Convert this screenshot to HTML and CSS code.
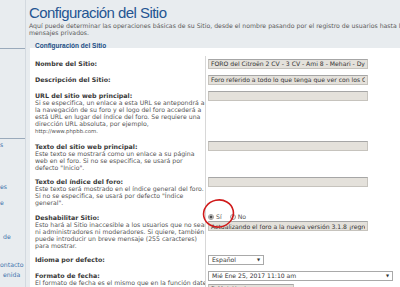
FILE: index.html
```html
<!DOCTYPE html>
<html lang="es">

<head>

 <meta charset="UTF-8">
 <meta name="viewport" content="width=device-width">

 <title>Configuración del Sitio</title>

 <!-- Estilos CSS -->
 <link rel="stylesheet" href="styles.css">

</head>

<body>

 <div class="pagina">

  <!-- Menú lateral (recortado) -->
  <nav class="menu">
   <div class="menu-cabecera"></div>
   <div class="menu-bloque"></div>
   <ul class="menu-lista">
    <li class="m1">s</li>
    <li class="m2">es</li>
    <li class="m3">e</li>
    <li class="m4">de</li>
    <li class="m5">ontacto</li>
    <li class="m6">enida</li>
   </ul>
  </nav>

  <main class="principal">

   <h1>Configuración del Sitio</h1>

   <p class="intro">Aquí puede determinar las operaciones básicas de su Sitio, desde el nombre pasando por el registro de usuarios hasta los<br>mensajes privados.</p>

   <h2 class="leyenda">Configuración del Sitio</h2>

   <div class="panel">

    <dl>
     <dt><label>Nombre del Sitio:</label></dt>
     <dd><input class="campo" value="FORO del Citroën 2 CV - 3 CV - Ami 8 - Mehari - Dyane"></dd>
    </dl>

    <dl>
     <dt><label>Descripción del Sitio:</label></dt>
     <dd><input class="campo" value="Foro referido a todo lo que tenga que ver con los Citroën"></dd>
    </dl>

    <dl>
     <dt>
      <label>URL del sitio web principal:</label>
      <span>Si se especifica, un enlace a esta URL se antepondrá a<br>la navegación de su foro y el logo del foro accederá a<br>está URL en lugar del índice del foro. Se requiere una<br>dirección URL absoluta, por ejemplo,<br><samp>http://www.phpbb.com.</samp></span>
     </dt>
     <dd><input class="campo" value=""></dd>
    </dl>

    <dl>
     <dt>
      <label>Texto del sitio web principal:</label>
      <span>Este texto se mostrará como un enlace a su página<br>web en el foro. Si no se especifica, se usará por<br>defecto "Inicio".</span>
     </dt>
     <dd><input class="campo" value=""></dd>
    </dl>

    <dl>
     <dt>
      <label>Texto del índice del foro:</label>
      <span>Este texto será mostrado en el índice general del foro.<br>Si no se especifica, se usará por defecto "Índice<br>general".</span>
     </dt>
     <dd><input class="campo" value=""></dd>
    </dl>

    <dl>
     <dt>
      <label>Deshabilitar Sitio:</label>
      <span>Esto hará al Sitio inaccesible a los usuarios que no sean<br>ni administradores ni moderadores. Si quiere, también<br>puede introducir un breve mensaje (255 caracteres)<br>para mostrar.</span>
     </dt>
     <dd>
      <div class="opciones">
       <label><input type="radio" name="deshabilitar" checked> Sí</label>
       <label><input type="radio" name="deshabilitar"> No</label>
      </div>
      <input class="campo" value="Actualizando el foro a la nueva versión 3.1.8 ¡regresamos pronto!">
     </dd>
    </dl>

    <dl>
     <dt><label>Idioma por defecto:</label></dt>
     <dd><div class="lista lista-corta">Español <b>▼</b></div></dd>
    </dl>

    <dl>
     <dt>
      <label>Formato de fecha:</label>
      <span>El formato de fecha es el mismo que en la función date<br>de PHP.</span>
     </dt>
     <dd>
      <div class="lista lista-larga">Mié Ene 25, 2017 11:10 am <b>▼</b></div>
      <input class="campo campo-fecha" value="D M d, Y g:i a">
     </dd>
    </dl>

   </div>

  </main>

 </div>

 <!-- Marca roja sobre la opción "Sí" -->
 <svg class="marca" width="38" height="34" viewBox="0 0 38 34">
  <ellipse cx="18.5" cy="16.5" rx="15" ry="13.5" transform="rotate(-12 18.5 16.5)" fill="none" stroke="#d01a1a" stroke-width="1.6"/>
 </svg>

</body>

</html>
```

FILE: styles.css
```css
/* Configuración básica */
* {
    margin: 0;
    padding: 0;
    box-sizing: border-box;
}

html,
body {
    width: 400px;
    height: 287px;
    overflow: hidden;
}

body {
    position: relative;
    background-color: #e8ecef;
    color: #4a4a4a;
    font-family: 'DejaVu Sans', Verdana, sans-serif;
    font-size: 6.2px;
    line-height: 7px;
}

.pagina {
    display: flex;
    height: 100%;
}

/* Menú lateral */
.menu {
    width: 26px;
    flex: none;
    border-right: 1px solid #d3d9df;
    overflow: hidden;
}

.menu-cabecera {
    height: 49px;
    border-bottom: 1px solid #9aaabb;
}

.menu-bloque {
    height: 90px;
    border-bottom: 1px solid #9aaabb;
}

.menu-lista {
    list-style: none;
    color: #3f74ad;
    line-height: 8px;
    white-space: nowrap;
}

.m1 { margin-top: 2px; }
.m2 { margin-top: 34px; }
.m3 { margin-top: 8px; }
.m4 { margin-top: 26px; padding-left: 3px; }
.m5 { margin-top: 20px; }
.m6 { margin-top: 2px; padding-left: 3px; }

/* Contenido */
.principal {
    flex: 1;
    min-width: 0;
    padding: 4px 0 0 3px;
    overflow: hidden;
}

h1 {
    font-family: 'Liberation Sans', Arial, sans-serif;
    font-weight: normal;
    font-size: 15px;
    line-height: 17px;
    letter-spacing: -0.55px;
    color: #245592;
}

.intro {
    margin-top: 1px;
    color: #5a5a5a;
    white-space: nowrap;
}

.leyenda {
    margin-top: 6px;
    margin-bottom: -1.5px;
    padding-left: 6px;
    font-family: 'Liberation Sans', Arial, sans-serif;
    font-size: 6.5px;
    line-height: 7px;
    font-weight: bold;
    color: #1d4f86;
}

.panel {
    margin-left: 1px;
    padding-top: 8px;
    height: 300px;
    background-color: #ffffff;
}

dl {
    display: flex;
}

dt {
    width: 176px;
    flex: none;
    padding: 4.5px 0 3px 5px;
    border-right: 1px solid #d8d8d8;
    overflow: hidden;
    white-space: nowrap;
}

dt label {
    display: block;
    font-size: 6.3px;
    font-weight: bold;
    color: #383838;
}

dt span {
    display: block;
    color: #555555;
}

dt samp {
    font-family: 'DejaVu Sans', sans-serif;
    font-size: 5.4px;
}

dd {
    padding: 3px 0 3px 2px;
    min-width: 0;
}

/* Campos */
.campo {
    display: block;
    width: 160px;
    height: 10px;
    padding: 0 2px;
    border: 1px solid #c6c3bd;
    border-top-color: #a6a6a6;
    background-color: #e4e1db;
    color: #333333;
    font-family: inherit;
    font-size: 6.1px;
    outline: none;
}

.campo-fecha {
    width: 86px;
    margin-top: 3px;
}

.opciones {
    display: flex;
    align-items: center;
    gap: 8px;
    height: 9px;
    color: #555555;
}

.opciones label {
    display: flex;
    align-items: center;
    gap: 2px;
}

input[type="radio"] {
    appearance: none;
    width: 6px;
    height: 6px;
    border: 1px solid #9c9c9c;
    border-radius: 50%;
    background-color: #f3f3f3;
}

input[type="radio"]:checked {
    background: radial-gradient(circle, #4a4a4a 0 1.3px, #f3f3f3 1.8px);
}

.lista {
    display: flex;
    justify-content: space-between;
    align-items: center;
    height: 10px;
    padding: 0 3px;
    border: 1px solid #a9a9a9;
    background-color: #ffffff;
    color: #333333;
    font-size: 6.1px;
}

.lista b {
    font-size: 4px;
    font-weight: normal;
}

.lista-corta {
    width: 56px;
}

.lista-larga {
    width: 185px;
}

/* Marca roja */
.marca {
    position: absolute;
    left: 200px;
    top: 197px;
}
```
